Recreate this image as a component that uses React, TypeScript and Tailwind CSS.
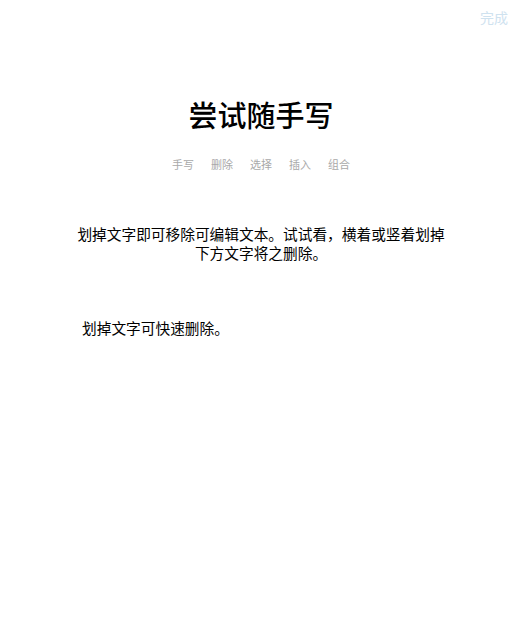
export default function App() {
  return (
    <div
      className="relative h-[620px] w-[522px] overflow-hidden bg-white text-black"
      style={{ fontFamily: '"Noto Sans CJK SC", "Noto Sans", sans-serif' }}
    >
      {/* Header */}
      <div className="flex justify-end px-[14px] pt-[7px]">
        <button className="text-[14px] leading-[20px] text-[#cfe2ef]">完成</button>
      </div>

      {/* Title */}
      <h1 className="mt-[69px] text-center text-[29px] font-medium leading-[36px]">尝试随手写</h1>

      {/* Tabs */}
      <nav className="mt-[24px] flex justify-center gap-[17px] text-[11px] leading-[16px] text-[#a9a9a9]">
        <span>手写</span>
        <span>删除</span>
        <span>选择</span>
        <span>插入</span>
        <span>组合</span>
      </nav>

      {/* Description */}
      <p className="mx-auto mt-[52px] w-[380px] text-center text-[14.7px] leading-[19px]">
        划掉文字即可移除可编辑文本。试试看，横着或竖着划掉下方文字将之删除。
      </p>

      <p className="ml-[82px] mt-[56px] text-[14.7px] leading-[20px]">划掉文字可快速删除。</p>
    </div>
  );
}
